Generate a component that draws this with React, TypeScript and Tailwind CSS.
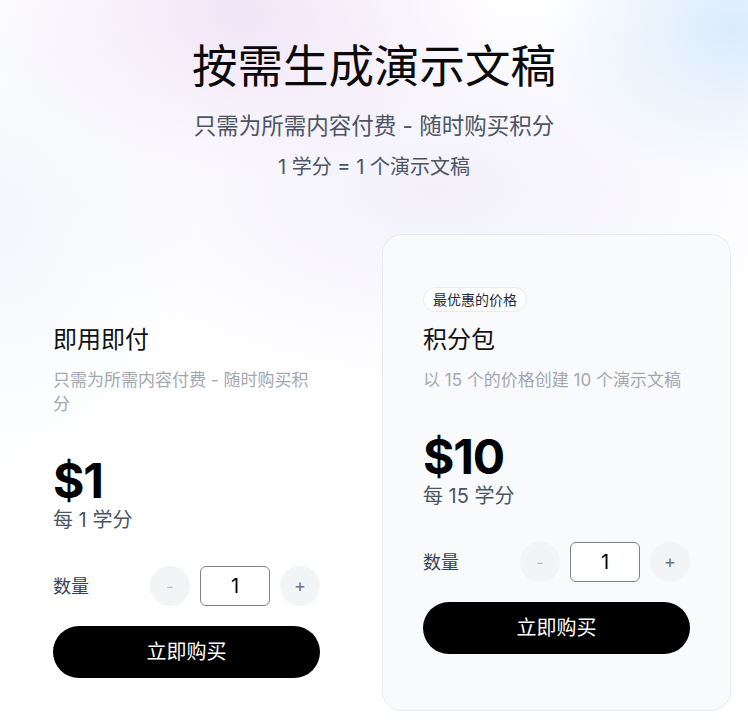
import { useState } from 'react'

type Plan = {
  badge?: string
  name: string
  desc: string
  price: string
  per: string
  featured?: boolean
}

const plans: Plan[] = [
  {
    name: '即用即付',
    desc: '只需为所需内容付费 - 随时购买积分',
    price: '$1',
    per: '每 1 学分',
  },
  {
    badge: '最优惠的价格',
    name: '积分包',
    desc: '以 15 个的价格创建 10 个演示文稿',
    price: '$10',
    per: '每 15 学分',
    featured: true,
  },
]

function Stepper() {
  const [qty, setQty] = useState(1)

  return (
    <div className="flex items-center gap-[10px]">
      <button
        onClick={() => setQty((q) => Math.max(1, q - 1))}
        className="w-10 h-10 rounded-full bg-[#f3f4f6] text-[#b8bcc3] text-base flex items-center justify-center"
      >
        -
      </button>
      <div className="w-[70px] h-10 rounded-md border border-[#7c818a] bg-white flex items-center justify-center text-[20px] text-black">
        {qty}
      </div>
      <button
        onClick={() => setQty((q) => q + 1)}
        className="w-10 h-10 rounded-full bg-[#f3f4f6] text-[#6b7280] text-lg flex items-center justify-center"
      >
        +
      </button>
    </div>
  )
}

function PlanCard({ plan }: { plan: Plan }) {
  return (
    <div
      className={`w-[349px] rounded-[20px] px-10 pt-[52px] pb-8 flex flex-col ${
        plan.featured ? 'bg-[#f9fafb] border border-[#e8eaee]' : 'border border-transparent'
      }`}
    >
      <div className={`h-[25px] ${plan.badge ? '' : 'invisible'}`}>
        <span className="inline-block rounded-full border border-[#e9eaed] bg-white px-[9px] py-px text-[14px] leading-[21px] text-[#1f2937]">
          {plan.badge ?? '-'}
        </span>
      </div>
      <h2 className="mt-3 text-[24px] leading-8 text-[#111]">{plan.name}</h2>
      <p className="mt-[12px] text-[17px] leading-6 text-[#a3a8b0]">{plan.desc}</p>
      <div className="mt-[43px] text-[48px] leading-[44px] font-bold text-black tracking-tight">
        {plan.price}
      </div>
      <div className="mt-[3px] text-[20px] leading-7 text-[#4b5563]">{plan.per}</div>
      <div className="mt-8 flex items-center justify-between">
        <span className="text-[18px] text-[#374151]">数量</span>
        <Stepper />
      </div>
      <button className="mt-5 h-[52px] w-full rounded-full bg-black text-white text-[20px]">
        立即购买
      </button>
    </div>
  )
}

export default function App() {
  return (
    <div className="min-h-[728px] w-[748px] bg-white bg-[image:radial-gradient(ellipse_260px_160px_at_32%_2%,rgba(238,224,246,0.85),transparent),radial-gradient(ellipse_190px_150px_at_98%_4%,rgba(216,234,252,0.95),transparent),radial-gradient(ellipse_380px_200px_at_58%_26%,rgba(241,238,250,0.9),transparent),radial-gradient(ellipse_200px_260px_at_0%_30%,rgba(240,244,250,0.8),transparent)] font-['Inter','Noto_Sans_CJK_SC',sans-serif] pt-[39px] pb-[18px]">
      <header className="flex flex-col items-center text-center">
        <h1 className="text-[45.5px] leading-[55px] text-[#0a0a0a]">按需生成演示文稿</h1>
        <p className="mt-4 text-[22.5px] leading-8 text-[#4b5563]">只需为所需内容付费 - 随时购买积分</p>
        <p className="mt-[11px] text-[20px] leading-7 text-[#4b5563]">1 学分 = 1 个演示文稿</p>
      </header>

      <div className="mt-[53px] ml-3 flex gap-[21px]">
        {plans.map((plan) => (
          <PlanCard key={plan.name} plan={plan} />
        ))}
      </div>
    </div>
  )
}
